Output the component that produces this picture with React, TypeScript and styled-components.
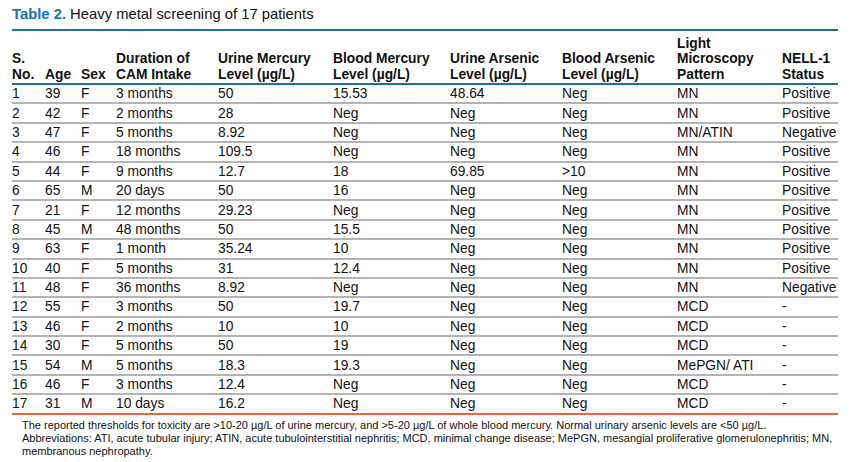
import styled, { createGlobalStyle } from "styled-components";

type Row = [string, string, string, string, string, string, string, string, string, string];

const rows: Row[] = [
  ["1", "39", "F", "3 months", "50", "15.53", "48.64", "Neg", "MN", "Positive"],
  ["2", "42", "F", "2 months", "28", "Neg", "Neg", "Neg", "MN", "Positive"],
  ["3", "47", "F", "5 months", "8.92", "Neg", "Neg", "Neg", "MN/ATIN", "Negative"],
  ["4", "46", "F", "18 months", "109.5", "Neg", "Neg", "Neg", "MN", "Positive"],
  ["5", "44", "F", "9 months", "12.7", "18", "69.85", ">10", "MN", "Positive"],
  ["6", "65", "M", "20 days", "50", "16", "Neg", "Neg", "MN", "Positive"],
  ["7", "21", "F", "12 months", "29.23", "Neg", "Neg", "Neg", "MN", "Positive"],
  ["8", "45", "M", "48 months", "50", "15.5", "Neg", "Neg", "MN", "Positive"],
  ["9", "63", "F", "1 month", "35.24", "10", "Neg", "Neg", "MN", "Positive"],
  ["10", "40", "F", "5 months", "31", "12.4", "Neg", "Neg", "MN", "Positive"],
  ["11", "48", "F", "36 months", "8.92", "Neg", "Neg", "Neg", "MN", "Negative"],
  ["12", "55", "F", "3 months", "50", "19.7", "Neg", "Neg", "MCD", "-"],
  ["13", "46", "F", "2 months", "10", "10", "Neg", "Neg", "MCD", "-"],
  ["14", "30", "F", "5 months", "50", "19", "Neg", "Neg", "MCD", "-"],
  ["15", "54", "M", "5 months", "18.3", "19.3", "Neg", "Neg", "MePGN/ ATI", "-"],
  ["16", "46", "F", "3 months", "12.4", "Neg", "Neg", "Neg", "MCD", "-"],
  ["17", "31", "M", "10 days", "16.2", "Neg", "Neg", "Neg", "MCD", "-"],
];

const headers: string[][] = [
  ["S.", "No."],
  ["Age"],
  ["Sex"],
  ["Duration of", "CAM Intake"],
  ["Urine Mercury", "Level (µg/L)"],
  ["Blood Mercury", "Level (µg/L)"],
  ["Urine Arsenic", "Level (µg/L)"],
  ["Blood Arsenic", "Level (µg/L)"],
  ["Light", "Microscopy", "Pattern"],
  ["NELL-1", "Status"],
];

const notes = [
  "The reported thresholds for toxicity are >10-20 µg/L of urine mercury, and >5-20 µg/L of whole blood mercury. Normal urinary arsenic levels are <50 µg/L.",
  "Abbreviations: ATI, acute tubular injury; ATIN, acute tubulointerstitial nephritis; MCD, minimal change disease; MePGN, mesangial proliferative glomerulonephritis; MN,",
  "membranous nephropathy.",
];

const GlobalStyle = createGlobalStyle`
  body {
    margin: 0;
    background: #ffffff;
    font-family: "Liberation Sans", Arial, sans-serif;
    color: #111;
  }
`;

export default function App() {
  return (
    <>
      <GlobalStyle />
      <Page>
        <Title>
          <TitleLabel>Table 2.</TitleLabel> Heavy metal screening of 17 patients
        </Title>
        <Table>
          <HeaderRow>
            {headers.map((h, i) => (
              <HeaderCell key={i}>
                {h.map((line, j) => (
                  <div key={j}>{line}</div>
                ))}
              </HeaderCell>
            ))}
          </HeaderRow>
          {rows.map((r, i) => (
            <BodyRow key={i} $last={i === rows.length - 1}>
              {r.map((c, j) => (
                <Cell key={j}>{c}</Cell>
              ))}
            </BodyRow>
          ))}
        </Table>
        <Footnote>
          {notes.map((n, i) => (
            <NoteLine key={i}>{n}</NoteLine>
          ))}
        </Footnote>
      </Page>
    </>
  );
}

const cols = "33px 36px 35px 102px 115px 117px 112px 115px 105px 56px";

const Page = styled.div`
  padding: 0 0 0 12px;
  width: 826px;
`;

const Title = styled.div`
  font-size: 14.8px;
  line-height: 17px;
  padding-top: 6px;
  height: 23px;
  border-bottom: 2px solid #1d6fa8;
  color: #111;
`;

const TitleLabel = styled.span`
  color: #1a72b4;
  font-weight: 700;
`;

const Table = styled.div`
  display: flex;
  flex-direction: column;
  font-size: 13.8px;
`;

const HeaderRow = styled.div`
  display: grid;
  grid-template-columns: ${cols};
  align-items: end;
  height: 51px;
  padding-bottom: 1px;
  border-bottom: 2px solid #1d6fa8;
  box-sizing: content-box;
`;

const HeaderCell = styled.div`
  font-weight: 700;
  line-height: 15.5px;
  white-space: nowrap;
`;

const BodyRow = styled.div<{ $last: boolean }>`
  display: grid;
  grid-template-columns: ${cols};
  align-items: center;
  height: 17.4px;
  border-bottom: 2px solid ${(p) => (p.$last ? "#e8643a" : "#b4b4b4")};
`;

const Cell = styled.div`
  line-height: 17px;
  white-space: nowrap;
`;

const Footnote = styled.div`
  padding: 4px 0 0 10px;
  font-size: 11px;
  line-height: 13px;
`;

const NoteLine = styled.div`
  white-space: nowrap;
`;
